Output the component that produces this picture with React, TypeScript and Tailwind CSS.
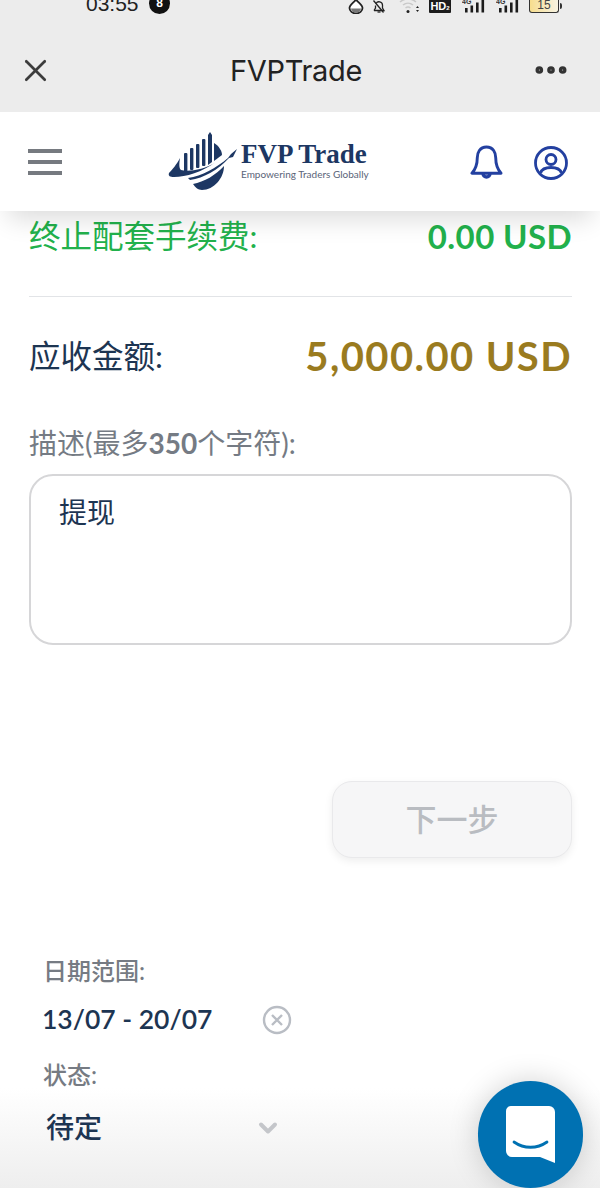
import { X, Ellipsis, ChevronDown } from 'lucide-react';

const CJK = "font-['Lato','Noto_Sans_CJK_SC',sans-serif]";

function StatusIcons() {
  return (
    <div className="flex items-start ml-auto mr-[38px] h-[14px]">
      {/* droplet */}
      <svg width="16" height="15" viewBox="0 0 16 15" className="-mt-px">
        <path d="M8 0.5 C6 3.5 1.5 6 1.5 9 A6.5 5.5 0 0 0 14.5 9 C14.5 6 10 3.5 8 0.5Z" fill="#fff" stroke="#222" strokeWidth="1.8" />
        <path d="M3 9.5 H13 A5 4 0 0 1 3 9.5Z" fill="#777" />
      </svg>
      {/* muted bell */}
      <svg width="14" height="14" viewBox="0 0 14 14" fill="none" stroke="#222" strokeWidth="1.3" className="ml-[8px]">
        <path d="M2 10.5 H12 L10.5 8 V5 A3.5 3.5 0 0 0 4 3.5" />
        <path d="M3.5 5.5 V8 L2 10.5" />
        <path d="M1.5 0.5 L11.5 12.5" />
        <path d="M5.5 12 H8.5" />
      </svg>
      {/* wifi */}
      <svg width="22" height="14" viewBox="0 0 22 14" fill="none" className="ml-[13px]">
        <path d="M1 2 A12 12 0 0 1 17 2" stroke="#c9c9c9" strokeWidth="1.5" />
        <path d="M4 5 A8 8 0 0 1 14 5" stroke="#c9c9c9" strokeWidth="1.5" />
        <path d="M6.5 8 A4 4 0 0 1 11.5 8" stroke="#c9c9c9" strokeWidth="1.5" />
        <circle cx="9" cy="11.5" r="1.5" fill="#222" />
        <path d="M17 8 L18.5 6 L20 8Z M17 10 L18.5 12 L20 10Z" fill="#222" />
      </svg>
      <div className="ml-[8px] w-[22px] h-[14px] -mt-px bg-[#1c1c1c] text-white text-[11px] font-bold leading-[14px] text-center rounded-[1px] font-['Liberation_Sans',sans-serif]">
        HD<span className="text-[6px]">2</span>
      </div>
      <Signal />
      <Signal />
      <div className="ml-[10px] -mt-[1px] flex items-center">
        <div className="w-[30px] h-[14px] rounded-b-[3px] border border-t-0 border-[#333] bg-gradient-to-r from-[#f7dd8d] to-[#f7f3e2] text-[12px] leading-[13px] text-center text-[#444] font-['Liberation_Sans',sans-serif]">
          15
        </div>
        <div className="w-[2px] h-[6px] bg-[#333] ml-px rounded-r-sm" />
      </div>
    </div>
  );
}

function Signal() {
  return (
    <svg width="23" height="14" viewBox="0 0 23 14" className="-mt-px ml-[11px]">
      <text x="0" y="5" fontSize="7" fontWeight="700" fill="#333" fontFamily="Liberation Sans">4G</text>
      <rect x="3" y="9" width="2.6" height="4.5" fill="#1c1c1c" />
      <rect x="8.5" y="6.5" width="2.6" height="7" fill="#1c1c1c" />
      <rect x="14" y="3.5" width="2.6" height="10" fill="#1c1c1c" />
      <rect x="19.5" y="0" width="2.6" height="13.5" fill="#1c1c1c" />
    </svg>
  );
}

function Logo() {
  return (
    <div className="flex items-center">
      <svg width="74" height="58" viewBox="0 0 74 58" className="shrink-0">
        <g fill="#1d3763">
          <rect x="16" y="21" width="3.4" height="20" rx="1" />
          <rect x="22" y="16" width="3.4" height="22" rx="1" />
          <rect x="28" y="12" width="3.4" height="24" rx="1" />
          <rect x="34" y="7" width="3.4" height="27" rx="1" />
          <path d="M40 3 L42 0 L44 3 V30 L40 33Z" />
          <path d="M12 26 C9 32 4 38 1 41 C0 44 2 45 6 45 C18 45 34 40 48 30 C36 38 20 40 13 38 C11 36 11 32 12 26Z" />
          <path d="M46 11 C51 14 54 19 54 23 L46 29Z" />
          <path d="M20 46 C34 44 48 36 60 26 L63 22 L69 17 L65 25 L61 26 C50 38 36 46 22 48Z" />
          <path d="M25 52 C36 50 48 43 56 34 C56 46 46 58 34 58 C30 58 27 55 25 52Z" />
        </g>
      </svg>
      <div className="-ml-[1px] flex flex-col">
        <span className="font-['Liberation_Serif',serif] font-bold text-[27px] leading-[27px] text-[#1d3763] whitespace-nowrap">FVP Trade</span>
        <span className="font-['Lato',sans-serif] text-[10px] leading-[12px] text-[#5a6478] whitespace-nowrap">Empowering Traders Globally</span>
      </div>
    </div>
  );
}

function Row({ label, value, labelCls, valueCls }: { label: string; value: string; labelCls: string; valueCls: string }) {
  return (
    <div className="flex items-center justify-between">
      <span className={labelCls}>{label}</span>
      <span className={valueCls}>{value}</span>
    </div>
  );
}

export default function App() {
  return (
    <div className={`relative w-[600px] h-[1188px] overflow-hidden bg-white flex flex-col ${CJK}`}>
      {/* webview chrome */}
      <div className="h-[112px] shrink-0 bg-[#ececec] flex flex-col">
        <div className="h-[14px] flex items-start relative">
          <span className="absolute left-[86px] -top-[8px] text-[21px] leading-[24px] text-[#222] font-['Liberation_Sans',sans-serif]">03:55</span>
          <span className="absolute left-[149px] -top-[7px] w-[21px] h-[21px] rounded-full bg-[#111] text-white text-[12px] font-bold leading-[21px] text-center font-['Liberation_Sans',sans-serif]">8</span>
          <StatusIcons />
        </div>
        <div className="flex items-center justify-between flex-1 pl-[17px] pr-[31px] pt-[14px]">
          <X size={37} strokeWidth={1.7} className="text-[#3c3c3c]" />
          <span className="ml-[7px] text-[29px] leading-none text-[#222] font-['Inter',sans-serif] font-normal tracking-[-0.3px]">FVPTrade</span>
          <Ellipsis size={40} strokeWidth={2.6} className="text-[#333] -mr-[2px]" />
        </div>
      </div>

      {/* app nav */}
      <div className="relative z-10 h-[99px] shrink-0 bg-white shadow-[0_16px_24px_-8px_rgba(0,0,0,0.14)] flex items-center pl-[28px] pr-[31px]">
        <div className="flex flex-col gap-[7px] w-[34px]">
          <div className="h-[4px] bg-[#767a80]" />
          <div className="h-[4px] bg-[#767a80]" />
          <div className="h-[4px] bg-[#767a80]" />
        </div>
        <div className="ml-[106px] -mt-[2px]">
          <Logo />
        </div>
        <div className="ml-auto flex items-center gap-[30px]">
          <svg width="33" height="35" viewBox="0 0 34 36" fill="none" stroke="#2340a0" strokeWidth="3" strokeLinejoin="round" className="mt-[2px]">
            <path d="M17 2 C10 2 7.5 8 7.5 13 C7.5 20 5.5 25 2 29 H32 C28.5 25 26.5 20 26.5 13 C26.5 8 24 2 17 2Z" />
            <path d="M13.5 29.5 A3.5 3.5 0 0 0 20.5 29.5" strokeWidth="3.5" />
          </svg>
          <svg width="36" height="36" viewBox="0 0 36 36" fill="none" stroke="#2340a0" strokeWidth="2.8" className="mt-[2px]">
            <circle cx="18" cy="18" r="15.5" />
            <circle cx="18" cy="14.5" r="5" />
            <path d="M7.5 28 C9 23.5 13 22.5 18 22.5 C23 22.5 27 23.5 28.5 28" />
          </svg>
        </div>
      </div>

      {/* content */}
      <div className="flex flex-col px-[29px] pr-[28px]">
        <div className="mt-[3px] pb-[38px] border-b border-[#e2e4e7]">
          <Row
            label="终止配套手续费:"
            value="0.00 USD"
            labelCls="text-[31.5px] leading-[44px] text-[#22b14c]"
            valueCls="text-[33px] leading-[44px] font-bold tracking-[0.4px] text-[#22b14c]"
          />
        </div>
        <div className="mt-[35px]">
          <Row
            label="应收金额:"
            value="5,000.00 USD"
            labelCls="text-[31.5px] leading-[48px] text-[#1d3552]"
            valueCls="text-[40px] leading-[48px] font-bold tracking-[1.4px] text-[#9a7b1f]"
          />
        </div>
        <div className="mt-[46px] text-[28px] leading-[34px] text-[#757b84]">
          描述(最多<span className="font-bold">350</span>个字符):
        </div>
        <textarea
          readOnly
          defaultValue="提现"
          className="mt-[14px] h-[171px] w-full resize-none rounded-[24px] border-2 border-[#d6d6d8] pl-[28px] pt-[17px] text-[28px] leading-[38px] text-[#1d3552] outline-none"
        />
        <div className="mt-[136px] flex justify-end">
          <button className="w-[240px] h-[77px] rounded-[20px] border border-[#e9e9eb] bg-[#f6f6f7] shadow-[0_3px_8px_rgba(0,0,0,0.07)] text-[31px] font-medium text-[#b9bcc1]">
            下一步
          </button>
        </div>
      </div>

      {/* filters */}
      <div className="relative z-10 mt-[97px] pl-[43px] w-[289px]">
        <div className="text-[24px] leading-[32px] font-medium text-[#767b83]">日期范围:</div>
        <div className="mt-[12px] flex items-center h-[42px]">
          <span className="-ml-px text-[26.5px] font-semibold text-[#1d3552] whitespace-nowrap">13/07 - 20/07</span>
          <svg width="30" height="30" viewBox="0 0 30 30" fill="none" stroke="#b9bdc4" strokeWidth="2.4" className="ml-auto mr-[-3px]">
            <circle cx="15" cy="15" r="13" />
            <path d="M10 10 L20 20 M20 10 L10 20" />
          </svg>
        </div>
        <div className="mt-[18px] text-[24px] leading-[32px] font-medium text-[#767b83]">状态:</div>
        <div className="mt-[13px] flex items-center justify-between h-[46px] pl-[3px] pr-[7px]">
          <span className="text-[28px] font-medium text-[#1d3552]">待定</span>
          <ChevronDown size={28} strokeWidth={3.4} className="text-[#c4c6ca] mt-[1px]" />
        </div>
      </div>

      {/* bottom fade */}
      <div className="absolute left-0 right-0 bottom-0 h-[100px] bg-gradient-to-b from-transparent to-[#eeeeee] pointer-events-none" />

      {/* chat widget */}
      <div className="absolute z-20 left-[478px] top-[1081px] w-[105px] h-[107px] rounded-full bg-[#0071b2] shadow-[0_0_30px_rgba(0,0,0,0.18)] flex items-center justify-center">
        <svg width="49" height="57" viewBox="0 0 49 57">
          <path d="M5 0 H43 A6 6 0 0 1 49 6 V57 L34 51 H6 A6 6 0 0 1 0 45 V5 A5 5 0 0 1 5 0Z" fill="#fff" />
          <path d="M8 36 C18 43 31 43 41 36" fill="none" stroke="#0071b2" strokeWidth="2.8" strokeLinecap="round" />
        </svg>
      </div>
    </div>
  );
}
